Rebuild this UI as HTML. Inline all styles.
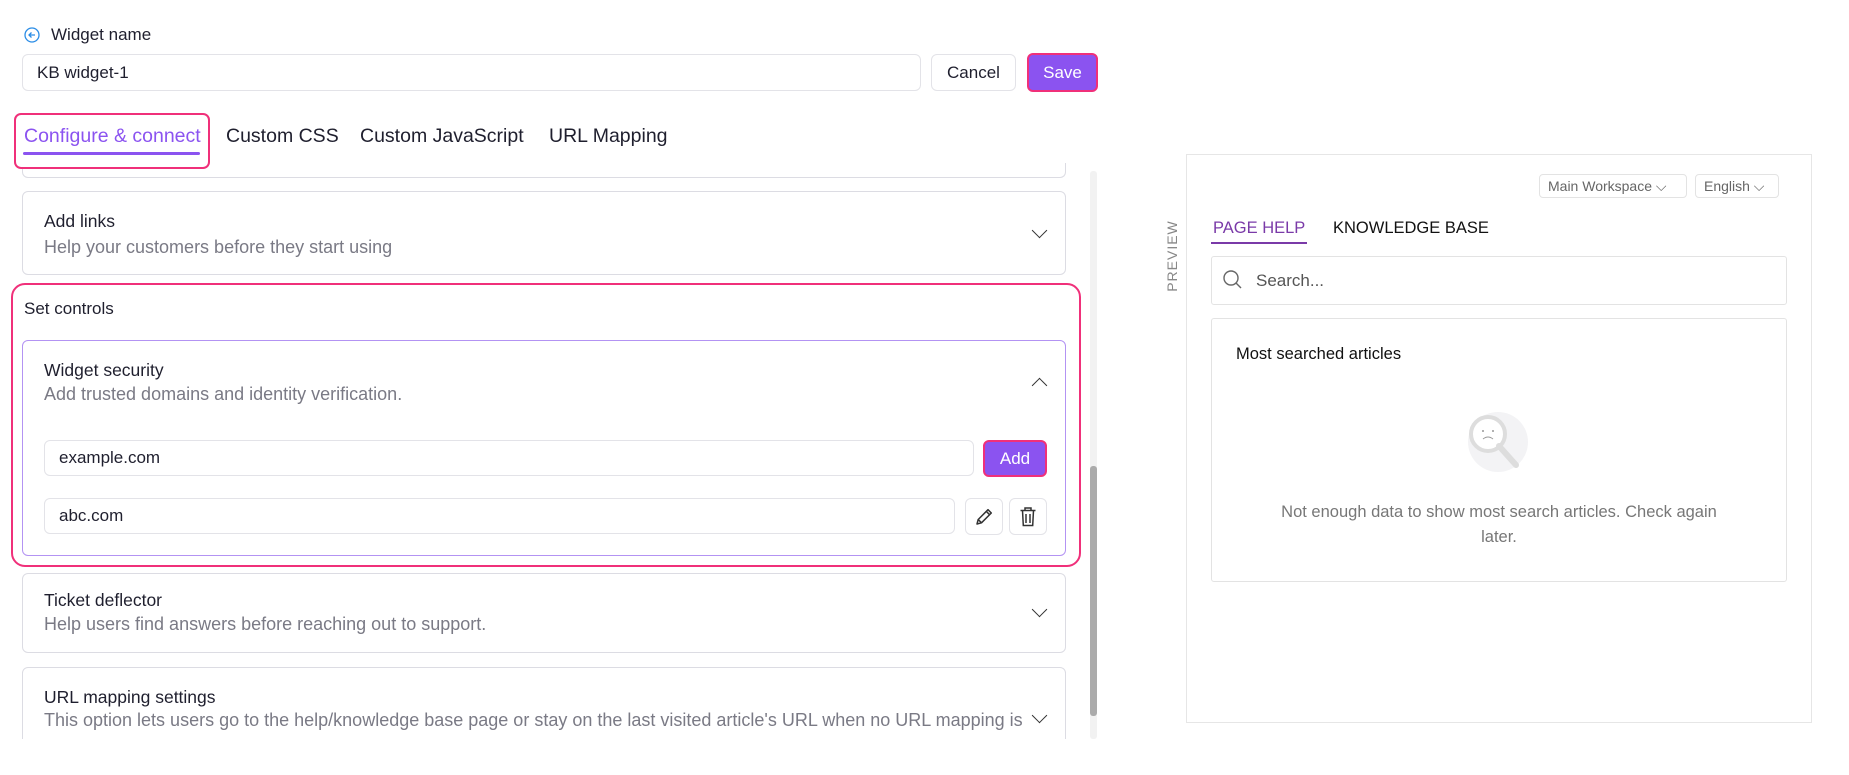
<!DOCTYPE html>
<html><head><meta charset="utf-8"><style>
*{box-sizing:border-box;margin:0;padding:0}
html,body{width:1849px;height:775px;overflow:hidden}
body{background:#fff;font-family:"Liberation Sans",sans-serif;color:#1f1f2e;position:relative}
.a{position:absolute}
.inp{position:absolute;border:1px solid #e3e3e8;border-radius:6px;background:#fff;font-size:17px;padding-left:14px;display:flex;align-items:center}
.card{position:absolute;left:22px;width:1044px;border:1px solid #dcdce3;border-radius:6px;background:#fff}
.t{position:absolute;left:21px;font-size:17.5px;color:#1f1f2e}
.s{position:absolute;left:21px;font-size:18px;color:#7a7a85;white-space:nowrap}
.chev{position:absolute;width:11px;height:11px;border-right:1.6px solid #333;border-bottom:1.6px solid #333}
.tab{position:absolute;top:125px;font-size:19.5px;color:#1f1f2e}
</style></head><body>
<svg class="a" style="left:24px;top:27px" width="16" height="16" viewBox="0 0 16 16"><circle cx="8" cy="8" r="7" fill="none" stroke="#2a8ce6" stroke-width="1.3"/><path d="M11 8H5M7.5 5.5L5 8l2.5 2.5" fill="none" stroke="#2a8ce6" stroke-width="1.3"/></svg>
<div class="a" style="left:51px;top:25px;font-size:17px">Widget name</div>
<div class="inp" style="left:22px;top:54px;width:899px;height:37px">KB widget-1</div>
<div class="inp" style="left:931px;top:54px;width:85px;height:37px;padding:0;justify-content:center">Cancel</div>
<div class="a" style="left:1027px;top:53px;width:71px;height:39px;background:#8b53f0;border:2px solid #f0307a;border-radius:6px;color:#fff;font-size:17px;display:flex;align-items:center;justify-content:center">Save</div>
<div class="a" style="left:1090px;top:171px;width:7px;height:568px;background:#f2f2f2;border-radius:3px"></div>
<div class="a" style="left:1090px;top:466px;width:7px;height:250px;background:#ababab;border-radius:3px"></div>
<div class="card" style="top:163px;height:15px;border-top:none;border-radius:0 0 6px 6px"></div>
<div class="a" style="left:14px;top:113px;width:196px;height:56px;border:2.5px solid #f0307a;border-radius:7px;background:#fff"></div>
<div class="tab" style="left:24px;color:#8b53f0">Configure &amp; connect</div>
<div class="a" style="left:23px;top:152px;width:177px;height:3px;background:#8b53f0;border-radius:2px"></div>
<div class="tab" style="left:226px">Custom CSS</div>
<div class="tab" style="left:360px">Custom JavaScript</div>
<div class="tab" style="left:549px">URL Mapping</div>
<div class="card" style="top:191px;height:84px"><div class="t" style="top:19px">Add links</div><div class="s" style="top:45px">Help your customers before they start using</div><div class="chev" style="left:1011px;top:33px;transform:rotate(45deg)"></div></div>
<div class="a" style="left:11px;top:283px;width:1070px;height:284px;border:2.5px solid #f0307a;border-radius:14px"></div>
<div class="a" style="left:24px;top:299px;font-size:17px">Set controls</div>
<div class="card" style="top:340px;height:216px;border-color:#b393f3"><div class="t" style="top:19px">Widget security</div><div class="s" style="top:43px">Add trusted domains and identity verification.</div><div class="chev" style="left:1011px;top:39px;transform:rotate(-135deg)"></div></div>
<div class="inp" style="left:44px;top:440px;width:930px;height:36px">example.com</div>
<div class="a" style="left:983px;top:440px;width:64px;height:37px;background:#8b53f0;border:2px solid #f0307a;border-radius:6px;color:#fff;font-size:17px;display:flex;align-items:center;justify-content:center">Add</div>
<div class="inp" style="left:44px;top:498px;width:911px;height:36px">abc.com</div>
<div class="inp" style="left:965px;top:498px;width:38px;height:37px;padding:0;justify-content:center"><svg width="22" height="22" viewBox="0 0 22 22"><path d="M4 18l1.2-4.5L15 3.7l3.3 3.3-9.8 9.8z M13.3 5.4l3.3 3.3 M5.2 13.5l3.3 3.3" fill="none" stroke="#333" stroke-width="1.5" stroke-linejoin="round"/></svg></div>
<div class="inp" style="left:1009px;top:498px;width:38px;height:37px;padding:0;justify-content:center"><svg width="18" height="22" viewBox="0 0 18 22"><path d="M1.5 4.5h15M6 4.5V2h6v2.5M3.5 4.5l.8 15h9.4l.8-15M7 8v9M11 8v9" fill="none" stroke="#333" stroke-width="1.5"/></svg></div>
<div class="card" style="top:573px;height:80px"><div class="t" style="top:16px">Ticket deflector</div><div class="s" style="top:40px">Help users find answers before reaching out to support.</div><div class="chev" style="left:1011px;top:30px;transform:rotate(45deg)"></div></div>
<div class="card" style="top:667px;height:100px"><div class="t" style="top:19px">URL mapping settings</div><div class="s" style="top:42px">This option lets users go to the help/knowledge base page or stay on the last visited article's URL when no URL mapping is</div><div class="chev" style="left:1011px;top:42px;transform:rotate(45deg)"></div></div>
<div class="a" style="left:0;top:739px;width:1100px;height:40px;background:#fff;z-index:5"></div>
<div class="a" style="left:1186px;top:154px;width:626px;height:569px;border:1px solid #e6e6e6"></div>
<div class="a" style="left:1136px;top:248px;font-size:14px;color:#888;letter-spacing:1px;transform:rotate(-90deg);transform-origin:center">PREVIEW</div>
<div class="a" style="left:1539px;top:174px;width:148px;height:24px;border:1px solid #e3e3e3;border-radius:4px;font-size:14px;color:#666;padding-left:8px;line-height:22px">Main Workspace ⌵</div>
<div class="a" style="left:1695px;top:174px;width:84px;height:24px;border:1px solid #e3e3e3;border-radius:4px;font-size:14px;color:#666;padding-left:8px;line-height:22px">English ⌵</div>
<div class="a" style="left:1213px;top:219px;font-size:16.5px;color:#7a3aa8">PAGE HELP</div>
<div class="a" style="left:1211px;top:242px;width:96px;height:2px;background:#7a3aa8"></div>
<div class="a" style="left:1333px;top:219px;font-size:16.5px;color:#111">KNOWLEDGE BASE</div>
<div class="a" style="left:1211px;top:256px;width:576px;height:49px;border:1px solid #e3e3e3;border-radius:3px"></div>
<svg class="a" style="left:1222px;top:269px" width="22" height="22" viewBox="0 0 22 22"><circle cx="9" cy="9" r="7" fill="none" stroke="#666" stroke-width="1.4"/><path d="M14 14l5 5" stroke="#666" stroke-width="1.4"/></svg>
<div class="a" style="left:1256px;top:271px;font-size:17px;color:#555">Search...</div>
<div class="a" style="left:1211px;top:318px;width:576px;height:264px;border:1px solid #e3e3e3;border-radius:3px"></div>
<div class="a" style="left:1236px;top:345px;font-size:16.5px;color:#111">Most searched articles</div>
<svg class="a" style="left:1458px;top:402px" width="80" height="80" viewBox="0 0 80 80"><circle cx="40" cy="40" r="30" fill="#f3f3f5"/><circle cx="30" cy="32" r="17" fill="#fff" stroke="#ddd" stroke-width="4"/><path d="M41 44l17 19" stroke="#ddd" stroke-width="6" stroke-linecap="round"/><circle cx="25" cy="29" r="1" fill="#999"/><circle cx="35" cy="29" r="1" fill="#999"/><path d="M25 37q5-4 10 0" fill="none" stroke="#999"/></svg>
<div class="a" style="left:1211px;top:500px;width:576px;text-align:center;font-size:16.5px;color:#777;line-height:25px">Not enough data to show most search articles. Check again<br>later.</div>
</body></html>
